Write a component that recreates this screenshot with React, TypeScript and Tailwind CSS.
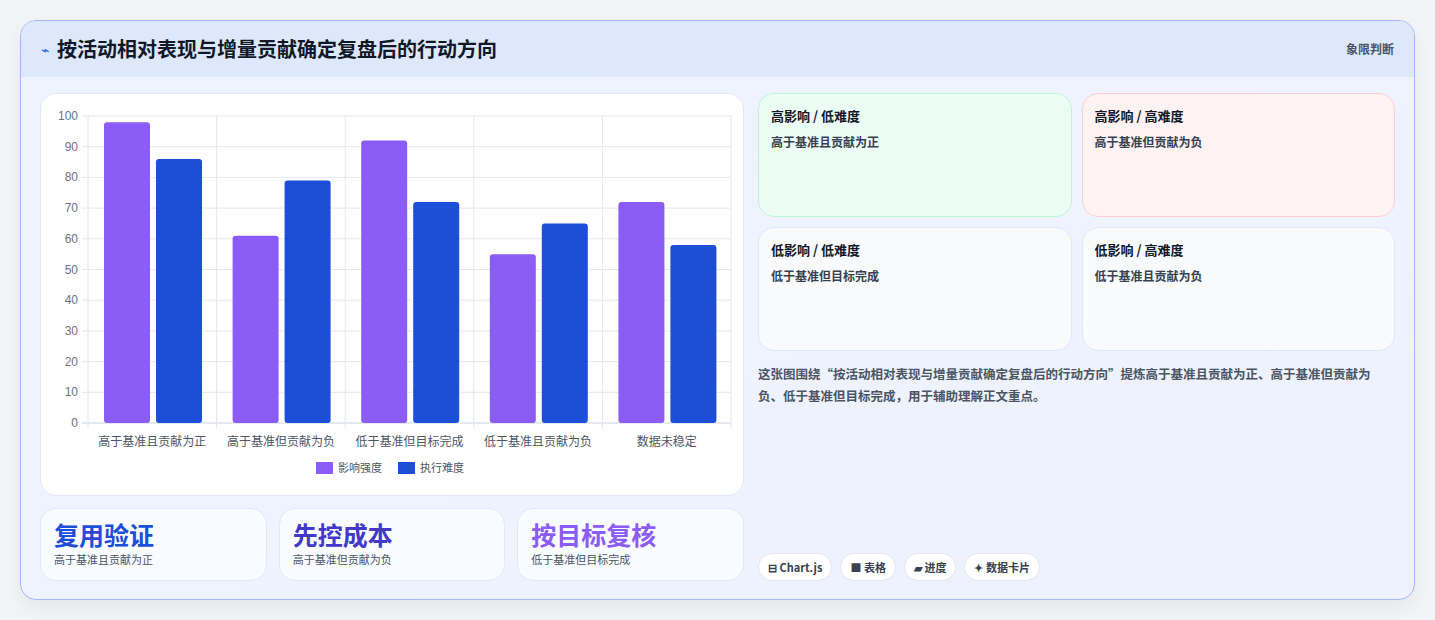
import React from "react";

const cats = ["高于基准且贡献为正", "高于基准但贡献为负", "低于基准但目标完成", "低于基准且贡献为负", "数据未稳定"];
const a = [98, 61, 92, 55, 72];
const b = [86, 79, 72, 65, 58];

function Chart() {
  const x0 = 47, x1 = 690, yTop = 22, yBot = 329;
  const cw = (x1 - x0) / 5;
  const y = (v: number) => yBot - (v / 100) * (yBot - yTop);
  return (
    <svg width="703" height="402" className="block" style={{ fontFamily: "'Liberation Sans','Noto Sans CJK SC',sans-serif" }}>
      {Array.from({ length: 11 }, (_, i) => i * 10).map((v) => (
        <g key={v}>
          <line x1={x0 - 6} x2={x1} y1={y(v)} y2={y(v)} stroke={v === 0 ? "#cbd5e1" : "#e5e7eb"} />
          <text x={x0 - 10} y={y(v) + 4} textAnchor="end" fontSize="12" fill="#6b7280">{v}</text>
        </g>
      ))}
      {Array.from({ length: 6 }, (_, i) => (
        <line key={i} x1={x0 + i * cw} x2={x0 + i * cw} y1={yTop} y2={yBot + 6} stroke="#e5e7eb" />
      ))}
      {cats.map((c, i) => {
        const cx = x0 + i * cw;
        return (
          <g key={c}>
            <rect x={cx + 16} y={y(a[i])} width="46" height={yBot - y(a[i])} rx="3" fill="#8b5cf6" />
            <rect x={cx + 68} y={y(b[i])} width="46" height={yBot - y(b[i])} rx="3" fill="#1d4ed8" />
            <text x={cx + cw / 2} y={yBot + 23} textAnchor="middle" fontSize="12" fill="#4b5563">{c}</text>
          </g>
        );
      })}
      <rect x="275" y="368" width="17" height="12" fill="#8b5cf6" />
      <text x="297" y="378" fontSize="11" fill="#4b5563">影响强度</text>
      <rect x="357" y="368" width="17" height="12" fill="#1d4ed8" />
      <text x="379" y="378" fontSize="11" fill="#4b5563">执行难度</text>
    </svg>
  );
}

function Quad({ t, s, c }: { t: string; s: string; c: string }) {
  return (
    <div className={`rounded-2xl border px-3 pt-3 h-[124px] ${c}`}>
      <div className="text-[13px] font-bold text-[#111827]">{t}</div>
      <div className="text-[12px] font-semibold text-[#374151] mt-[7px]">{s}</div>
    </div>
  );
}

function Kpi({ t, s, c }: { t: string; s: string; c: string }) {
  return (
    <div className="flex-1 rounded-2xl border border-[#e0e7ff] bg-[#f8fbff] px-[13px] pt-[8px] h-[73px]">
      <div className={`text-[25px] font-bold leading-[34px] ${c}`}>{t}</div>
      <div className="text-[11px] text-[#4b5563] leading-[16px]">{s}</div>
    </div>
  );
}

export default function App() {
  return (
    <div className="w-[1435px] h-[620px] bg-[#f3f4f6] pt-5 pl-5" style={{ fontFamily: "'Noto Sans CJK SC','Liberation Sans',sans-serif" }}>
      <div className="w-[1395px] h-[580px] rounded-2xl border border-[#a5b4fc] overflow-hidden bg-gradient-to-br from-[#eef4ff] to-[#eef2fe] shadow-[0_8px_20px_rgba(0,0,0,0.06)]">
        <div className="h-[56px] bg-[#dde8fd] flex items-center justify-between pl-5 pr-5">
          <div className="flex items-center gap-2">
            <span className="text-[#2563eb] text-[14px]">⌁</span>
            <span className="text-[20px] font-bold text-[#111827]">按活动相对表现与增量贡献确定复盘后的行动方向</span>
          </div>
          <span className="text-[12px] font-semibold text-[#4b5563]">象限判断</span>
        </div>
        <div className="flex gap-[14px] px-[19px] pt-[16px]">
          <div className="w-[704px] flex flex-col gap-3">
            <div className="h-[403px] bg-white rounded-2xl border border-[#e0e7ff] overflow-hidden"><Chart /></div>
            <div className="flex gap-3">
              <Kpi t="复用验证" s="高于基准且贡献为正" c="text-[#1d4ed8]" />
              <Kpi t="先控成本" s="高于基准但贡献为负" c="text-[#4338ca]" />
              <Kpi t="按目标复核" s="低于基准但目标完成" c="text-[#8b5cf6]" />
            </div>
          </div>
          <div className="w-[637px] flex flex-col h-[488px]">
            <div className="grid grid-cols-2 gap-[10px]">
              <Quad t="高影响 / 低难度" s="高于基准且贡献为正" c="bg-[#ecfdf5] border-[#bbf7d0]" />
              <Quad t="高影响 / 高难度" s="高于基准但贡献为负" c="bg-[#fef2f2] border-[#fecdd3]" />
              <Quad t="低影响 / 低难度" s="低于基准但目标完成" c="bg-[#f8fafc] border-[#e0e7ff]" />
              <Quad t="低影响 / 高难度" s="低于基准且贡献为负" c="bg-[#f8fafc] border-[#e0e7ff]" />
            </div>
            <p className="mt-[12px] pr-2 text-[12.5px] font-semibold leading-[22px] text-[#4b5563]">这张图围绕“按活动相对表现与增量贡献确定复盘后的行动方向”提炼高于基准且贡献为正、高于基准但贡献为负、低于基准但目标完成，用于辅助理解正文重点。</p>
            <div className="mt-auto flex gap-2">
              {["⊟ Chart.js", "■ 表格", "▰ 进度", "✦ 数据卡片"].map((t) => (
                <span key={t} className="rounded-full bg-white border border-[#e5e7eb] px-[9px] h-[28px] flex items-center text-[11px] font-bold text-[#374151]">{t}</span>
              ))}
            </div>
          </div>
        </div>
      </div>
    </div>
  );
}
